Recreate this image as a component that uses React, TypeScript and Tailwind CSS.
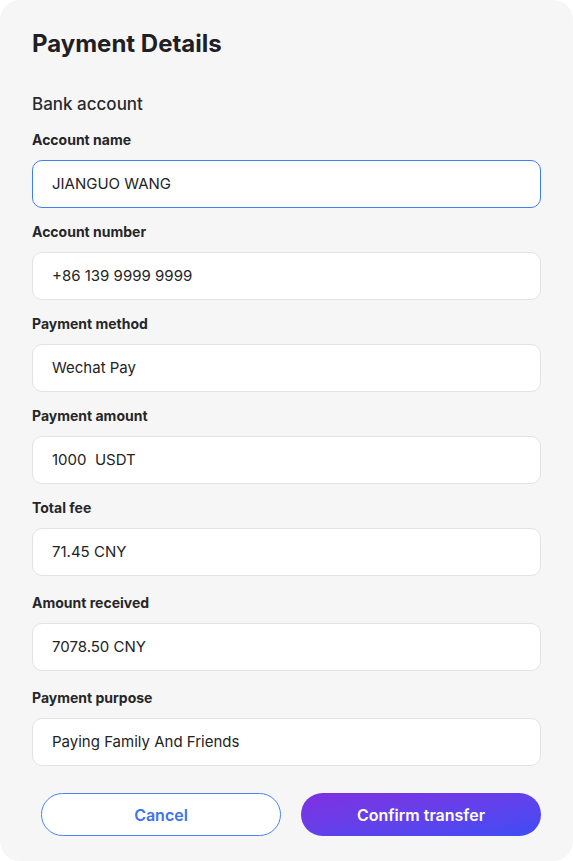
const fields = [
  { label: "Account name", value: "JIANGUO WANG", active: true, gap: "mt-0" },
  { label: "Account number", value: "+86 139 9999 9999", gap: "mt-4" },
  { label: "Payment method", value: "Wechat Pay", gap: "mt-4" },
  { label: "Payment amount", value: "1000  USDT", gap: "mt-4" },
  { label: "Total fee", value: "71.45 CNY", gap: "mt-4" },
  { label: "Amount received", value: "7078.50 CNY", gap: "mt-[19px]" },
  { label: "Payment purpose", value: "Paying Family And Friends", gap: "mt-[19px]" },
];

function Field({
  label,
  value,
  active,
  gap,
}: {
  label: string;
  value: string;
  active?: boolean;
  gap: string;
}) {
  return (
    <div className={gap}>
      <div className="h-4 text-[14px] leading-4 font-bold text-[#262629]">{label}</div>
      <div
        className={
          "mt-3 h-12 rounded-[10px] bg-white flex items-center px-[19px] text-[15px] text-[#232326] whitespace-pre " +
          (active ? "border border-[#3f7ff5]" : "border border-[#e3e3e3]")
        }
      >
        {value}
      </div>
    </div>
  );
}

export default function App() {
  return (
    <div
      className="w-[573px] h-[861px] bg-white"
      style={{ fontFamily: "Inter, 'Noto Sans', sans-serif" }}
    >
      <div className="h-full rounded-[20px] bg-[#f6f6f6] px-8 pt-[30px]">
        <h1 className="h-7 text-[24px] leading-7 font-bold text-[#1f2024]">
          Payment Details
        </h1>
        <div className="mt-9 h-5 text-[17px] leading-5 font-medium text-[#2a2a2e]">
          Bank account
        </div>
        <div className="mt-[18px]">
          {fields.map((f) => (
            <Field key={f.label} {...f} />
          ))}
        </div>
        <div className="mt-[27px] flex gap-5 pl-[9px]">
          <button className="h-[43px] w-[240px] rounded-full border border-[#4a82f7] bg-white text-[16px] font-semibold text-[#3b73f0]">
            Cancel
          </button>
          <button className="h-[43px] w-[240px] rounded-full bg-gradient-to-br from-[#7f2fe0] to-[#3c4cf5] text-[16px] font-semibold text-white">
            Confirm transfer
          </button>
        </div>
      </div>
    </div>
  );
}
